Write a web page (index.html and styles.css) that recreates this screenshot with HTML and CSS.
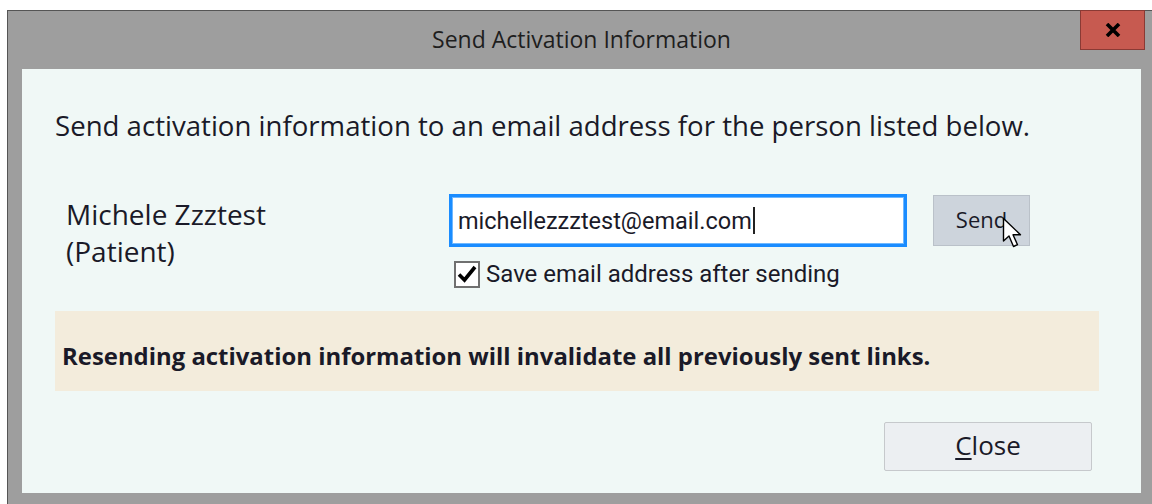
FILE: index.html
```html
<!DOCTYPE html>
<html lang="en">
<head>
<meta charset="utf-8">
<title>Send Activation Information</title>
<link rel="stylesheet" href="styles.css">
</head>
<body>
<div class="window">
  <div class="titlebar">
    <span class="title">Send Activation Information</span>
    <button class="close-x" type="button" aria-label="Close">
      <svg width="16" height="14" viewBox="0 0 16 14"><path d="M2 1 L14 13 M14 1 L2 13" stroke="#000" stroke-width="3.6" fill="none"/></svg>
    </button>
  </div>
  <div class="content">
    <p class="intro">Send activation information to an email address for the person listed below.</p>
    <div class="person-row">
      <div class="person">
        <div>Michele Zzztest</div>
        <div>(Patient)</div>
      </div>
      <div class="email-col">
        <div class="email-line">
          <div class="email-box"><span class="email-text">michellezzztest@email.com</span><span class="caret"></span></div>
          <button class="send-btn" type="button">Send
            <svg class="pointer" width="26" height="34" viewBox="0 0 26 34"><path d="M1.5 1.5 L1.5 24 L7 19 L11.5 29.5 L15.5 27.7 L11 17.8 L18.5 17.8 Z" fill="#fff" stroke="#000" stroke-width="1.4" stroke-linejoin="round"/></svg>
          </button>
        </div>
        <label class="save-opt">
          <span class="check"><svg width="20" height="18" viewBox="0 0 20 18"><path d="M2 9.5 L7.5 15 L18 2" stroke="#000" stroke-width="3.6" fill="none"/></svg></span>
          <span>Save email address after sending</span>
        </label>
      </div>
    </div>
    <div class="notice">Resending activation information will invalidate all previously sent links.</div>
    <div class="footer">
      <button class="close-btn" type="button"><u>C</u>lose</button>
    </div>
  </div>
</div>
</body>
</html>
```

FILE: styles.css
```css
html, body {
  margin: 0;
  padding: 0;
  background: #ffffff;
  overflow: hidden;
}

.window {
  margin: 10px 0 0 7px;
  width: 1160px;
  height: 494px;
  box-sizing: border-box;
  background: #9e9e9e;
  border: 1px solid #555555;
  border-bottom: none;
  padding: 0 0 0 14px;
}

.titlebar {
  position: relative;
  height: 58px;
  width: 1119px;
  display: flex;
  align-items: center;
  justify-content: center;
}

.title {
  font-family: "Open Sans", "Noto Sans", sans-serif;
  font-size: 23px;
  color: #1e1e1e;
  margin-top: -2px;
}

.close-x {
  position: absolute;
  top: -1px;
  right: -4px;
  width: 65px;
  height: 40px;
  background: #c75a50;
  border: 1px solid #8a3a34;
  display: flex;
  align-items: center;
  justify-content: center;
  padding: 0;
}

.content {
  width: 1119px;
  height: 424px;
  background: #f0f8f6;
  box-sizing: border-box;
  padding: 0 0 0 33px;
  font-family: "Open Sans", "Noto Sans", sans-serif;
  color: #1a1a28;
}

.intro {
  margin: 0;
  padding-top: 40px;
  font-size: 27.6px;
  line-height: 32px;
}

.person-row {
  display: flex;
  margin-top: 53px;
}

.person {
  width: 383px;
  padding: 2px 0 0 11px;
  font-size: 28px;
  line-height: 37px;
}

.email-col {
  display: flex;
  flex-direction: column;
}

.email-line {
  display: flex;
  align-items: flex-start;
}

.email-box {
  width: 458px;
  height: 53px;
  box-sizing: border-box;
  background: #ffffff;
  border: 3px solid #1a8cff;
  box-shadow: inset 0 0 0 1px #6fb8ff;
  display: flex;
  align-items: center;
  padding-left: 6px;
  font-family: Roboto, "Liberation Sans", sans-serif;
  font-size: 23.5px;
  color: #1a1a28;
}

.caret {
  width: 2px;
  height: 27px;
  background: #222;
  margin-left: 1px;
}

.send-btn {
  position: relative;
  margin: 1px 0 0 26px;
  width: 97px;
  height: 51px;
  background: #cdd4dc;
  border: 1px solid #bac1c9;
  font-family: "Open Sans", "Noto Sans", sans-serif;
  font-size: 22px;
  color: #1a1a28;
  padding: 0 0 4px 0;
}

.pointer {
  position: absolute;
  left: 68px;
  top: 21px;
}

.save-opt {
  display: flex;
  align-items: center;
  gap: 6px;
  margin: 13px 0 0 5px;
  font-family: Roboto, "Liberation Sans", sans-serif;
  font-size: 24px;
  color: #1a1a28;
}

.check {
  width: 26px;
  height: 27px;
  box-sizing: border-box;
  border: 2px solid #707070;
  background: #ffffff;
  display: flex;
  align-items: center;
  justify-content: center;
}

.notice {
  margin-top: 23px;
  width: 1044px;
  height: 80px;
  box-sizing: border-box;
  background: #f3ecdc;
  display: flex;
  align-items: center;
  padding: 8px 0 0 7px;
  font-size: 23.9px;
  font-weight: 700;
}

.footer {
  display: flex;
  justify-content: flex-end;
  width: 1037px;
  margin-top: 31px;
}

.close-btn {
  width: 208px;
  height: 49px;
  background: #eceff2;
  border: 1px solid #c6c9cc;
  border-radius: 2px;
  font-family: "Open Sans", "Noto Sans", sans-serif;
  font-size: 26px;
  color: #1a1a28;
  padding: 0 0 4px 0;
}

.close-btn u {
  text-decoration-thickness: 2px;
  text-underline-offset: 3px;
}
```
